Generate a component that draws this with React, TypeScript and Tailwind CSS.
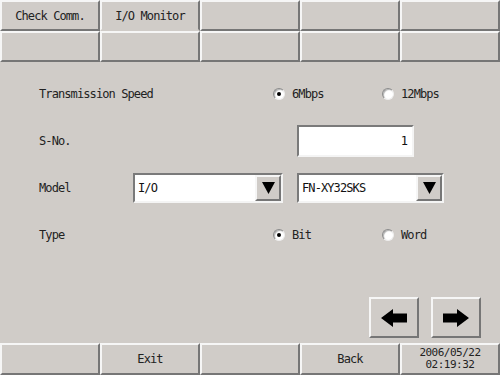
import React from "react";

const raised =
  "border-2 border-t-[#f6f6f6] border-l-[#f6f6f6] border-r-[#767676] border-b-[#767676]";
const sunken =
  "border-2 border-t-[#7a7a7a] border-l-[#7a7a7a] border-r-[#f4f4f4] border-b-[#f4f4f4]";

function Cell({ children, active }: { children?: React.ReactNode; active?: boolean }) {
  return (
    <div
      className={`flex items-center justify-center text-[#222] ${raised} ${
        active ? "border-b-[#d0ccc8]" : ""
      }`}
    >
      {children}
    </div>
  );
}

function Radio({ checked, label, width }: { checked?: boolean; label: string; width?: string }) {
  return (
    <div className={`flex items-center gap-[7px] ${width ?? ""}`}>
      <div className="w-[12px] h-[12px] rounded-full bg-white border border-t-[#8a8a8a] border-l-[#8a8a8a] border-r-[#eeeeee] border-b-[#eeeeee] flex items-center justify-center shadow-[inset_1px_1px_1px_#b0b0b0]">
        {checked && <div className="w-[4px] h-[4px] rounded-full bg-black" />}
      </div>
      <span>{label}</span>
    </div>
  );
}

function Dropdown({ value, width }: { value: string; width: string }) {
  return (
    <div className={`flex h-[30px] bg-white ${sunken} ${width}`}>
      <div className="flex-1 flex items-center pl-[3px] text-[#111]">{value}</div>
      <div
        className={`w-[26px] bg-[#d0ccc8] flex items-center justify-center ${raised}`}
      >
        <svg width="13" height="12" viewBox="0 0 13 12">
          <path d="M0 0 H13 L6.5 12 Z" fill="#000" />
        </svg>
      </div>
    </div>
  );
}

function Arrow({ dir }: { dir: "left" | "right" }) {
  return (
    <div className={`w-[50px] h-[41px] flex items-center justify-center bg-[#d0ccc8] ${raised}`}>
      <svg
        width="26"
        height="18"
        viewBox="0 0 26 18"
        style={{ transform: dir === "right" ? "scaleX(-1)" : undefined }}
      >
        <path d="M0 9 L12 0 L12 4.5 L26 4.5 L26 13.5 L12 13.5 L12 18 Z" fill="#000" />
      </svg>
    </div>
  );
}

export default function App() {
  return (
    <div className="w-[500px] h-[375px] bg-[#d0ccc8] flex flex-col overflow-hidden font-['DejaVu_Sans_Mono',monospace] text-[12px] tracking-[-0.9px] text-[#222]">
      <div className="grid grid-cols-5 grid-rows-[31px_31px] h-[62px]">
        <Cell>Check Comm.</Cell>
        <Cell active>I/O Monitor</Cell>
        <Cell />
        <Cell />
        <Cell />
        <Cell />
        <Cell />
        <Cell />
        <Cell />
        <Cell />
      </div>

      <div className="flex-1 flex flex-col pl-[39px] pt-[16px]">
        <div className="flex items-center h-[32px]">
          <div className="w-[234px]">Transmission Speed</div>
          <Radio checked label="6Mbps" width="w-[109px]" />
          <Radio label="12Mbps" />
        </div>

        <div className="flex items-center h-[32px] mt-[15px]">
          <div className="w-[258px]">S-No.</div>
          <div className={`w-[117px] h-[32px] bg-white flex items-center justify-end pr-[5px] text-[#111] ${sunken}`}>
            1
          </div>
        </div>

        <div className="flex items-center h-[30px] mt-[16px]">
          <div className="w-[94px]">Model</div>
          <Dropdown value="I/O" width="w-[150px]" />
          <div className="w-[14px]" />
          <Dropdown value="FN-XY32SKS" width="w-[147px]" />
        </div>

        <div className="flex items-center h-[32px] mt-[16px]">
          <div className="w-[234px]">Type</div>
          <Radio checked label="Bit" width="w-[109px]" />
          <Radio label="Word" />
        </div>

        <div className="flex justify-end gap-[12px] pr-[19px] mt-[46px]">
          <Arrow dir="left" />
          <Arrow dir="right" />
        </div>
      </div>

      <div className="grid grid-cols-5 h-[32px]">
        <Cell />
        <Cell>Exit</Cell>
        <Cell />
        <Cell>Back</Cell>
        <Cell>
          <div className="flex flex-col items-center text-[11px] tracking-[-0.5px] leading-[12px]">
            <span>2006/05/22</span>
            <span>02:19:32</span>
          </div>
        </Cell>
      </div>
    </div>
  );
}
